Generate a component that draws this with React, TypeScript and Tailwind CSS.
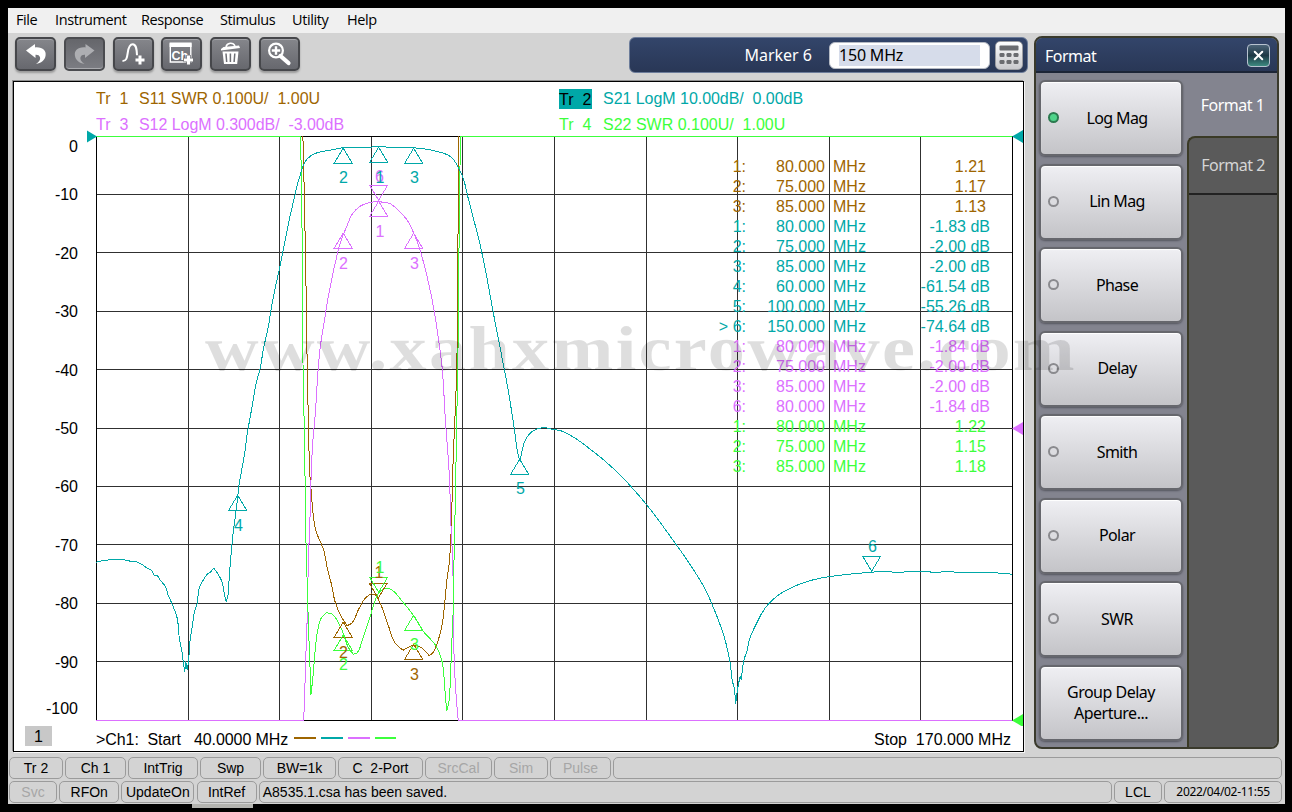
import type { ReactNode } from "react";
import { X } from "lucide-react";

const menus = [
  { label: "File", width: "w-[39px]" },
  { label: "Instrument", width: "w-[86px]" },
  { label: "Response", width: "w-[79px]" },
  { label: "Stimulus", width: "w-[72px]" },
  { label: "Utility", width: "w-[55px]" },
  { label: "Help", width: "w-[60px]" },
];

const formats = ["Log Mag", "Lin Mag", "Phase", "Delay", "Smith", "Polar", "SWR"];

const BROWN = "#9e6500";
const TEAL = "#00a8a8";
const PINK = "#dc70ff";
const GREEN = "#3cff3c";

const gridX = [188, 279, 371, 462, 554, 646, 737, 829, 920];
const gridY = [194, 252, 311, 369, 428, 486, 544, 603, 661];

const scale = [
  { y: 152, text: "0" },
  { y: 200, text: "-10" },
  { y: 259, text: "-20" },
  { y: 317, text: "-30" },
  { y: 376, text: "-40" },
  { y: 434, text: "-50" },
  { y: 492, text: "-60" },
  { y: 551, text: "-70" },
  { y: 609, text: "-80" },
  { y: 668, text: "-90" },
  { y: 714, text: "-100" },
];

const s21 =
  "96,562 100,561 105,560 127,560 130,561 135,561 139,563 143,565 147,568 151,570 154,575 157,575 160,580 165,586 168,595 172,604 177,618 179,637 182,653 183,661 184.5,672 185.5,661 187,670 188.5,660 189.5,643 192,627 194,613 197,603 199,588 203,580 207,574 210,572 213.5,568 218,574 222,582 224,593 226,601 227.5,597 229,577 231,553 232.5,537 235,517 237.5,497 238.5,487 242,467 244.5,453 247,433 248.5,425 252.5,403 256,383 260,368 263.5,347 267.5,330 270,315 272.5,300 280,265 285,240 289,220 294,198 297,185 300,175 304,163 310,156 317,152.5 333,149.5 343,147.5 357,147 397,147 423,148.5 440,152 448,155 453,159 458,167 463,178 468,198 475,225 480,245 486,274 493,312 500,348 508,390 514,428 518,455 520,461 522,450 525,440 530,433 536,429 545,427.5 552,429 562,431 575,438 590,449 605,461 620,475 635,491 650,509 662,525 675,543 687,560 698,577 706,591 713,607 719,622 725,640 730,663 732,680 734,688 735.5,704 737.5,688 740,676 741,680 744,659 747,650 749,640 754,628 757,622 761,614 768,604 778,595 790,588 805,582 820,578 840,575 860,573 880,571.5 900,572 915,571 935,572 950,571.5 960,572.5 985,572 1000,573 1012,574";

const s12 =
  "96,720 303.5,720 304.5,693 305.5,660 307,617 308.5,550 309.5,530 310,507 311,475 312.5,443 315,415 318,368 320,347 323.5,325 327.5,300 331.5,279 335,263 340,243 347,225 352,214 360,206 367,203 375,201.5 383,202 390,203.5 398,210 407,220 414,234 420,250 423.5,263 427.5,279 432,300 437,330 442,368 445,417 449,473 451,530 452,550 453,583 454,660 456,697 458,720 1012,720";

const s22 =
  "96,136.3 300.5,136.3 301,173 302.5,279 302.8,363 304.5,450 305.5,530 306.8,577 308.5,633 309.7,663 310.7,695 312.7,677 315,650 317.5,630 321,618 326,612.5 332,614 338,622 343,633 348,647 353,654 357,652.5 362,640 366,628 371,613 375,600 379,592 386,588 392,590 402,601 413,615 423,631 436,646 442,662 444.5,687 446.5,711 448.5,703 450.5,670 452,633 453,610 454,550 454.5,530 456.5,423 458.5,300 458.5,279 459.8,168 460,136.3 1012,136.3";

const s11 =
  "302.7,136 304,190 305.7,279 306.7,347 308.3,427 309.7,475 311.5,497 312.5,510 315.5,530 323.5,550 327.5,570 331.5,585 335,602 342,618 347,625.5 352,622.5 358,610 365,598 371,593.5 375,595 380,603 388,625 395,643 403,650 408,647 415,645 422,648 429,655.5 433,652 437,643 441.5,627 444.5,603 446.7,580 449,563 450,550 451,530 452.7,467 456,385 457.7,300 457.8,237 458.8,136";

// Joins the sweep points with gentle curves, but keeps sharp corners straight
const tracePath = (points: string) => {
  const p = points.split(" ").map((s) => s.split(",").map(Number));
  const tangent = (i: number) => {
    if (i === 0 || i === p.length - 1) return [0, 0];
    const ax = p[i][0] - p[i - 1][0];
    const ay = p[i][1] - p[i - 1][1];
    const bx = p[i + 1][0] - p[i][0];
    const by = p[i + 1][1] - p[i][1];
    const a = Math.hypot(ax, ay);
    const b = Math.hypot(bx, by);
    if ((ax * bx + ay * by) / (a * b) < 0.6) return [0, 0];
    const tx = ax / a + bx / b;
    const ty = ay / a + by / b;
    const t = Math.hypot(tx, ty);
    return [tx / t, ty / t];
  };
  let d = `M${p[0][0]} ${p[0][1]}`;
  for (let i = 1; i < p.length; i++) {
    const [x0, y0] = p[i - 1];
    const [x1, y1] = p[i];
    const k = Math.hypot(x1 - x0, y1 - y0) / 3;
    const t0 = tangent(i - 1);
    const t1 = tangent(i);
    d += `C${x0 + t0[0] * k} ${y0 + t0[1] * k} ${x1 - t1[0] * k} ${y1 - t1[1] * k} ${x1} ${y1}`;
  }
  return d;
};

type Marker = {
  n: string;
  x: number;
  y: number;
  color: string;
  down?: boolean;
  lx: number;
  ly: number;
};

const markers: Marker[] = [
  { n: "1", x: 378, y: 598, color: BROWN, down: true, lx: 379, ly: 578 },
  { n: "2", x: 343, y: 622, color: BROWN, lx: 343.5, ly: 658 },
  { n: "3", x: 413.5, y: 644, color: BROWN, lx: 414.5, ly: 680 },
  { n: "6", x: 378.5, y: 200, color: PINK, down: true, lx: 379.5, ly: 182 },
  { n: "1", x: 378.5, y: 201, color: PINK, lx: 380, ly: 237 },
  { n: "2", x: 343, y: 233, color: PINK, lx: 343.5, ly: 269 },
  { n: "3", x: 413.5, y: 233, color: PINK, lx: 414.5, ly: 269 },
  { n: "1", x: 378.5, y: 592, color: GREEN, down: true, lx: 380, ly: 573 },
  { n: "2", x: 343, y: 635, color: GREEN, lx: 343.5, ly: 670 },
  { n: "3", x: 413.5, y: 615, color: GREEN, lx: 414.5, ly: 650 },
  { n: "1", x: 378.5, y: 147, color: TEAL, lx: 380, ly: 183 },
  { n: "2", x: 343, y: 148, color: TEAL, lx: 343.5, ly: 183 },
  { n: "3", x: 413.5, y: 148, color: TEAL, lx: 414.5, ly: 183 },
  { n: "4", x: 237.5, y: 495, color: TEAL, lx: 238.5, ly: 531 },
  { n: "5", x: 519.5, y: 459, color: TEAL, lx: 520.5, ly: 494 },
  { n: "6", x: 871.5, y: 571, color: TEAL, down: true, lx: 872.5, ly: 552 },
];

const readings = [
  { n: "1:", freq: "80.000", value: "1.21", color: "text-[#9e6500]" },
  { n: "2:", freq: "75.000", value: "1.17", color: "text-[#9e6500]" },
  { n: "3:", freq: "85.000", value: "1.13", color: "text-[#9e6500]" },
  { n: "1:", freq: "80.000", value: "-1.83 dB", color: "text-[#00a8a8]" },
  { n: "2:", freq: "75.000", value: "-2.00 dB", color: "text-[#00a8a8]" },
  { n: "3:", freq: "85.000", value: "-2.00 dB", color: "text-[#00a8a8]" },
  { n: "4:", freq: "60.000", value: "-61.54 dB", color: "text-[#00a8a8]" },
  { n: "5:", freq: "100.000", value: "-55.26 dB", color: "text-[#00a8a8]" },
  { n: "> 6:", freq: "150.000", value: "-74.64 dB", color: "text-[#00a8a8]" },
  { n: "1:", freq: "80.000", value: "-1.84 dB", color: "text-[#dc70ff]" },
  { n: "2:", freq: "75.000", value: "-2.00 dB", color: "text-[#dc70ff]" },
  { n: "3:", freq: "85.000", value: "-2.00 dB", color: "text-[#dc70ff]" },
  { n: "6:", freq: "80.000", value: "-1.84 dB", color: "text-[#dc70ff]" },
  { n: "1:", freq: "80.000", value: "1.22", color: "text-[#3cff3c]" },
  { n: "2:", freq: "75.000", value: "1.15", color: "text-[#3cff3c]" },
  { n: "3:", freq: "85.000", value: "1.18", color: "text-[#3cff3c]" },
];

const statusTop = [
  { text: "Tr 2", width: "w-[54px]" },
  { text: "Ch 1", width: "w-[61px]" },
  { text: "IntTrig", width: "w-[70px]" },
  { text: "Swp", width: "w-[61px]" },
  { text: "BW=1k", width: "w-[73px]" },
  { text: "C  2-Port", width: "w-[85px]" },
  { text: "SrcCal", width: "w-[67px]", off: true },
  { text: "Sim", width: "w-[54px]", off: true },
  { text: "Pulse", width: "w-[61px]", off: true },
];

const statusBottom = [
  { text: "Svc", width: "w-[48px]", off: true },
  { text: "RFOn", width: "w-[60px]" },
  { text: "UpdateOn", width: "w-[73px]" },
  { text: "IntRef", width: "w-[60px]" },
];

const ToolButton = ({ children, pressed }: { children: ReactNode; pressed?: boolean }) => (
  <button
    className={
      pressed
        ? "h-[34px] w-[41px] rounded-[5px] border-2 border-[#4b4c50] bg-linear-to-b from-[#65666b] to-[#7c7d83] shadow-[inset_0_-1px_0_#a9aaae]"
        : "h-[34px] w-[41px] rounded-[5px] border-2 border-[#46474b] bg-linear-to-b from-[#85868b] to-[#67686e] shadow-[inset_0_1px_0_#a4a5aa,0_2px_2px_#9a9a9a]"
    }
  >
    <svg viewBox="2 2 37 30" className="h-[30px] w-[37px]" fill="none">
      {children}
    </svg>
  </button>
);

const StatusCell = ({ text, width, off }: { text: string; width: string; off?: boolean }) => (
  <div
    className={`flex h-[22px] shrink-0 items-center justify-center rounded-[5px] border border-[#9b9b9b] whitespace-pre ${width} ${
      off ? "text-[#a6a6a6]" : "text-black"
    }`}
  >
    {text}
  </div>
);

const Toolbar = () => (
  <div className="flex h-12 items-start pt-[4px] pl-[7px]">
    <div className="flex gap-[7.8px]">
      <ToolButton>
        <path
          d="M11 13.500 20 7v3.400c8-.6 11.300 3.400 10.600 8.200-.6 4.800-4.600 7.700-9.600 8.400 3.500-2.200 4.600-4.500 4-6.700-.5-2.100-2.500-2.800-4.500-2.600V21Z"
          fill="#fff"
        />
      </ToolButton>
      <ToolButton pressed>
        <path
          d="M30.500 13.500 21.500 7v3.400c-8-.6-11.300 3.400-10.600 8.200.6 4.800 4.600 7.700 9.600 8.400-3.500-2.200-4.600-4.500-4-6.700.5-2.100 2.500-2.800 4.500-2.600V21Z"
          fill="#adaeb2"
        />
      </ToolButton>
      <ToolButton>
        <path d="M9.500 24c4 0 4.500-3 5.200-8 .8-6 2-8.700 5-8.700 3.300 0 4 4 4.300 11" stroke="#fff" strokeWidth="2" />
        <path d="M27 18.500v9M22.500 23h9" stroke="#fff" strokeWidth="3" />
      </ToolButton>
      <ToolButton>
        <path d="M9.300 7h20.500v18H9.300Z" stroke="#fff" strokeWidth="1.400" />
        <path d="M8.600 5.500h22v4.500h-22Z" fill="#fff" />
        <text x="10.500" y="22.500" fill="#fff" className="font-['Liberation_Sans'] text-[12.500px] font-bold">
          Ch
        </text>
        <path d="M27.500 18v10M22.500 23h10" stroke="#717277" strokeWidth="4.500" />
        <path d="M27.500 18.500v9M23 23h9" stroke="#fff" strokeWidth="3" />
      </ToolButton>
      <ToolButton>
        <path d="M16 10c1-4.500 7-5 9-1" stroke="#fff" strokeWidth="1.600" />
        <path d="m11 12 2.500-2L29 8.500l1 2.500-19 2.500Z" fill="#fff" />
        <path d="M12.500 14.500h16L27.200 27H14Z" fill="#fff" />
        <path d="m16 16.500.7 8.500M20.400 16.500V25M24.800 16.500l-.7 8.500" stroke="#6d6e74" strokeWidth="1.500" />
      </ToolButton>
      <ToolButton>
        <path d="m21.500 19 8 7" stroke="#fff" strokeWidth="4.200" strokeLinecap="round" />
        <circle cx="17" cy="13.500" r="6.900" stroke="#fff" strokeWidth="2.200" />
        <path d="M17 9.300v8.400M12.800 13.500h8.400" stroke="#fff" strokeWidth="2.400" />
      </ToolButton>
    </div>

    {/* Active entry bar */}
    <div className="ml-auto flex h-9 w-[399px] items-center justify-end rounded-md border border-[#6c7c9a] bg-linear-to-b from-[#33456a] to-[#293756] pr-[4px] font-['Noto_Sans'] text-[16px] text-white">
      <span className="mr-[17px]">Marker 6</span>
      <div className="flex h-[27px] w-[161px] items-center rounded-md border border-[#b5bac4] bg-white pl-[9px]">
        <div className="flex h-[21px] w-[141px] items-center bg-[#d6dcea] tracking-[-0.2px] text-black">150 MHz</div>
      </div>
      <button className="ml-[5px] flex h-[29px] w-[28px] items-center justify-center rounded-[5px] border border-[#9c9da2] bg-linear-to-b from-white to-[#c9c9cd]">
        <svg viewBox="0 0 20 20" className="h-5 w-5" fill="#6b6c70">
          <rect x="0.500" y="0.500" width="19" height="5" rx="1" />
          <rect x="0.500" y="8" width="5" height="4" rx="1.200" />
          <rect x="7.500" y="8" width="5" height="4" rx="1.200" />
          <rect x="14.500" y="8" width="5" height="4" rx="1.200" />
          <rect x="0.500" y="15" width="5" height="4" rx="1.200" />
          <rect x="7.500" y="15" width="5" height="4" rx="1.200" />
          <rect x="14.500" y="15" width="5" height="4" rx="1.200" />
        </svg>
      </button>
    </div>
  </div>
);

const Chart = () => (
  <svg viewBox="14 130 1009 596" className="-mt-[6px] h-[596px] w-[1009px] shrink-0" fill="none">
    <g stroke="#303030" strokeWidth="1" shapeRendering="crispEdges">
      {gridX.map((x) => (
        <path key={x} d={`M${x + 0.5} 136V720`} />
      ))}
      {gridY.map((y) => (
        <path key={y} d={`M96 ${y + 0.5}H1012`} />
      ))}
      <path d="M96.500 136.500H1012.500V720.500H96.500Z" stroke="#000" />
    </g>

    <g fill="#000" textAnchor="end" className="font-['Liberation_Sans'] text-[16px]">
      {scale.map((s) => (
        <text key={s.text} x="78" y={s.y}>
          {s.text}
        </text>
      ))}
    </g>

    <g strokeWidth="1" shapeRendering="crispEdges" transform="translate(0.200 0.200)">
      <path d={tracePath(s11)} stroke={BROWN} />
      <path d={tracePath(s12)} stroke={PINK} />
      <path d={tracePath(s22)} stroke={GREEN} />
      <path d={tracePath(s21)} stroke={TEAL} />
      {markers.map((m, i) => (
        <path
          key={i}
          stroke={m.color}
          d={
            m.down
              ? `M${m.x} ${m.y}L${m.x - 9} ${m.y - 15}H${m.x + 9}Z`
              : `M${m.x} ${m.y}L${m.x - 9} ${m.y + 15}H${m.x + 9}Z`
          }
        />
      ))}
    </g>

    <g textAnchor="middle" className="font-['Liberation_Sans'] text-[16px]">
      {markers.map((m, i) => (
        <text key={i} x={m.lx} y={m.ly} fill={m.color}>
          {m.n}
        </text>
      ))}
    </g>

    {/* Reference level pointers */}
    <path d="M87 130.500V142.500L97 136.500Z" fill={TEAL} />
    <path d="M1023 130V143L1012 136.500Z" fill={TEAL} />
    <path d="M1023 422V435L1012 428.500Z" fill={PINK} />
    <path d="M1023 714V727L1012 720.500Z" fill={GREEN} />
  </svg>
);

const TracePanel = () => (
  <div className="relative ml-[5px] flex h-[671px] w-[1011px] flex-col border border-black bg-white font-['Liberation_Sans'] text-[16px] shadow-[-1px_-1px_0_#8f8f8f,1px_1px_0_#f5f5f5]">
    <div className="grid h-[54px] shrink-0 grid-cols-[463px_1fr] grid-rows-[26px_26px] items-center pt-[4px] pl-[82px] whitespace-pre">
      <div className="flex text-[#9e6500]">
        <span className="w-[43px]">Tr  1</span>
        <span>S11 SWR 0.100U/  1.00U</span>
      </div>
      <div className="flex items-center text-[#00a8a8]">
        <span className="-mt-px mr-[11px] h-[20px] w-[33px] bg-[#00a8a8] leading-[22px] text-black">Tr  2</span>
        <span className="tracking-[-0.040px]">S21 LogM 10.00dB/  0.00dB</span>
      </div>
      <div className="flex text-[#dc70ff]">
        <span className="w-[43px]">Tr  3</span>
        <span className="tracking-[-0.050px]">S12 LogM 0.300dB/  -3.00dB</span>
      </div>
      <div className="flex text-[#3cff3c]">
        <span className="w-[44px]">Tr  4</span>
        <span>S22 SWR 0.100U/  1.00U</span>
      </div>
    </div>

    <Chart />

    <div className="flex h-[25px] items-center pt-[1px] pl-[11px] whitespace-pre">
      <span className="-mt-px h-[20px] w-[27px] self-start bg-[#c8c8c8] text-center leading-[21px]">1</span>
      <span className="ml-[44px] w-[198px] pt-px tracking-[-0.080px]">{">Ch1:  Start   40.0000 MHz"}</span>
      <div className="flex gap-[5px] pb-[2px]">
        <i className="h-[2px] w-[22px] bg-[#9e6500]" />
        <i className="h-[2px] w-[22px] bg-[#00a8a8]" />
        <i className="h-[2px] w-[22px] bg-[#dc70ff]" />
        <i className="h-[2px] w-[21px] bg-[#3cff3c]" />
      </div>
      <span className="mr-[12px] ml-auto pt-px">Stop  170.000 MHz</span>
    </div>

    {/* Marker readout */}
    <div className="absolute top-[75px] left-[702px] w-[274px]">
      {readings.map((r, i) => (
        <div key={i} className={`flex h-5 items-center whitespace-pre ${r.color}`}>
          <span className="w-[30px] text-right">{r.n}</span>
          <span className="w-[79px] text-right">{r.freq}</span>
          <span className="ml-[8px]">MHz</span>
          <span className={r.value.endsWith("dB") ? "ml-auto" : "mr-[4px] ml-auto"}>{r.value}</span>
        </div>
      ))}
    </div>
  </div>
);

const FormatPanel = () => (
  <div className="mt-[3px] ml-[6px] flex h-[713px] w-[245px] flex-col overflow-hidden rounded-lg border-2 border-[#3a3a2c] bg-[#83848f] font-['Noto_Sans'] text-[16px]">
    <div className="flex h-[35px] shrink-0 items-center justify-between border-b-2 border-[#1c2537] bg-linear-to-b from-[#33456a] to-[#293756] pr-[7px] pl-[9px] text-white">
      <span className="pt-[2px] tracking-[-0.5px]">Format</span>
      <button className="mt-[2px] flex h-[23px] w-[23px] items-center justify-center rounded-[4px] border border-[#b7c2cf] bg-linear-to-b from-[#4c6478] via-[#1d3845] to-[#3d8a80]">
        <X size={15} strokeWidth={3.2} />
      </button>
    </div>
    <div className="flex min-h-0 flex-1">
      <div className="flex w-[152px] shrink-0 flex-col justify-between pt-[7px] pr-[5px] pb-[6px] pl-[3px] text-black">
        {formats.map((f) => (
          <button
            key={f}
            className="relative flex h-[76px] items-center justify-center rounded-md border-2 border-[#66676d] bg-linear-to-b from-[#efeff3] to-[#c4c4c8] pb-[1px] pl-[12px] tracking-[-0.6px] shadow-[inset_0_1px_1px_#fff,0_1px_2px_#55565f]"
          >
            <i
              className={
                f === "Log Mag"
                  ? "absolute left-[7px] h-[11px] w-[11px] rounded-full border-2 border-[#2c7a50] bg-[#4fd48a]"
                  : "absolute left-[7px] h-[11px] w-[11px] rounded-full border-2 border-[#8a8a8e] bg-[#dcdce0]"
              }
            />
            {f}
          </button>
        ))}
        <button className="flex h-[76px] items-center justify-center rounded-md border-2 border-[#66676d] bg-linear-to-b from-[#efeff3] to-[#c4c4c8] leading-[21px] tracking-[-0.5px] shadow-[inset_0_1px_1px_#fff,0_1px_2px_#55565f]">
          Group Delay
          <br />
          Aperture...
        </button>
      </div>
      <div className="flex flex-1 flex-col">
        <div className="flex h-[63px] shrink-0 items-center justify-center tracking-[-0.5px] text-white">Format 1</div>
        <div className="-ml-px flex flex-1 flex-col rounded-tl-lg border-t-2 border-l-2 border-[#3a3a26] bg-[#5a5a5a]">
          <div className="flex h-[57px] items-center justify-center border-b-2 border-[#222] pb-[2px] tracking-[-0.5px] text-[#d5d5d5]">
            Format 2
          </div>
        </div>
      </div>
    </div>
  </div>
);

const App = () => {
  return (
    <div className="relative h-[812px] w-[1292px] overflow-hidden bg-black pt-2 pl-2">
      <div className="flex h-[796px] w-[1277px] flex-col bg-[#d3d3d3]">
        <nav className="flex h-[25px] shrink-0 items-center bg-[#f0f0f0] pb-[2px] pl-[8px] font-['Open_Sans'] text-[14.500px] tracking-[-0.400px] text-black">
          {menus.map((m) => (
            <span key={m.label} className={m.width}>
              {m.label}
            </span>
          ))}
        </nav>

        <div className="flex h-[723px] shrink-0">
          <div className="w-[1020px] shrink-0">
            <Toolbar />
            <TracePanel />
          </div>
          <FormatPanel />
        </div>

        <footer className="flex flex-col gap-[2px] pt-[1px] pl-[1px] font-['Liberation_Sans'] text-[14px]">
          <div className="flex gap-[2px]">
            {statusTop.map((s) => (
              <StatusCell key={s.text} {...s} />
            ))}
            <StatusCell text="" width="w-[669px]" />
          </div>
          <div className="flex gap-[2.200px]">
            {statusBottom.map((s) => (
              <StatusCell key={s.text} {...s} />
            ))}
            <div className="flex h-[22px] w-[853px] items-center rounded-[5px] border border-[#9b9b9b] pl-[3px]">
              A8535.1.csa has been saved.
            </div>
            <StatusCell text="LCL" width="w-[48px]" />
            <div className="flex h-[22px] w-[118px] items-center justify-center rounded-[5px] border border-[#9b9b9b] font-['Noto_Sans'] text-[12px] tracking-[-0.3px]">
              2022/04/02-11:55
            </div>
          </div>
        </footer>
      </div>
      <div className="ml-[184px] h-[4px] w-[61px] bg-[#b4b4b0]" />

      {/* Watermark across the whole window */}
      <svg
        viewBox="0 0 900 80"
        className="pointer-events-none absolute top-[310px] left-[205px] h-[80px] w-[900px]"
        fill="#000"
        fillOpacity="0.13"
      >
        <text
          x="0"
          y="59.500"
          textLength="872"
          lengthAdjust="spacingAndGlyphs"
          className="font-['Liberation_Serif'] text-[64px] font-bold tracking-[2px]"
        >
          www.xahxmicrowave.com
        </text>
      </svg>
    </div>
  );
};

export default App;
